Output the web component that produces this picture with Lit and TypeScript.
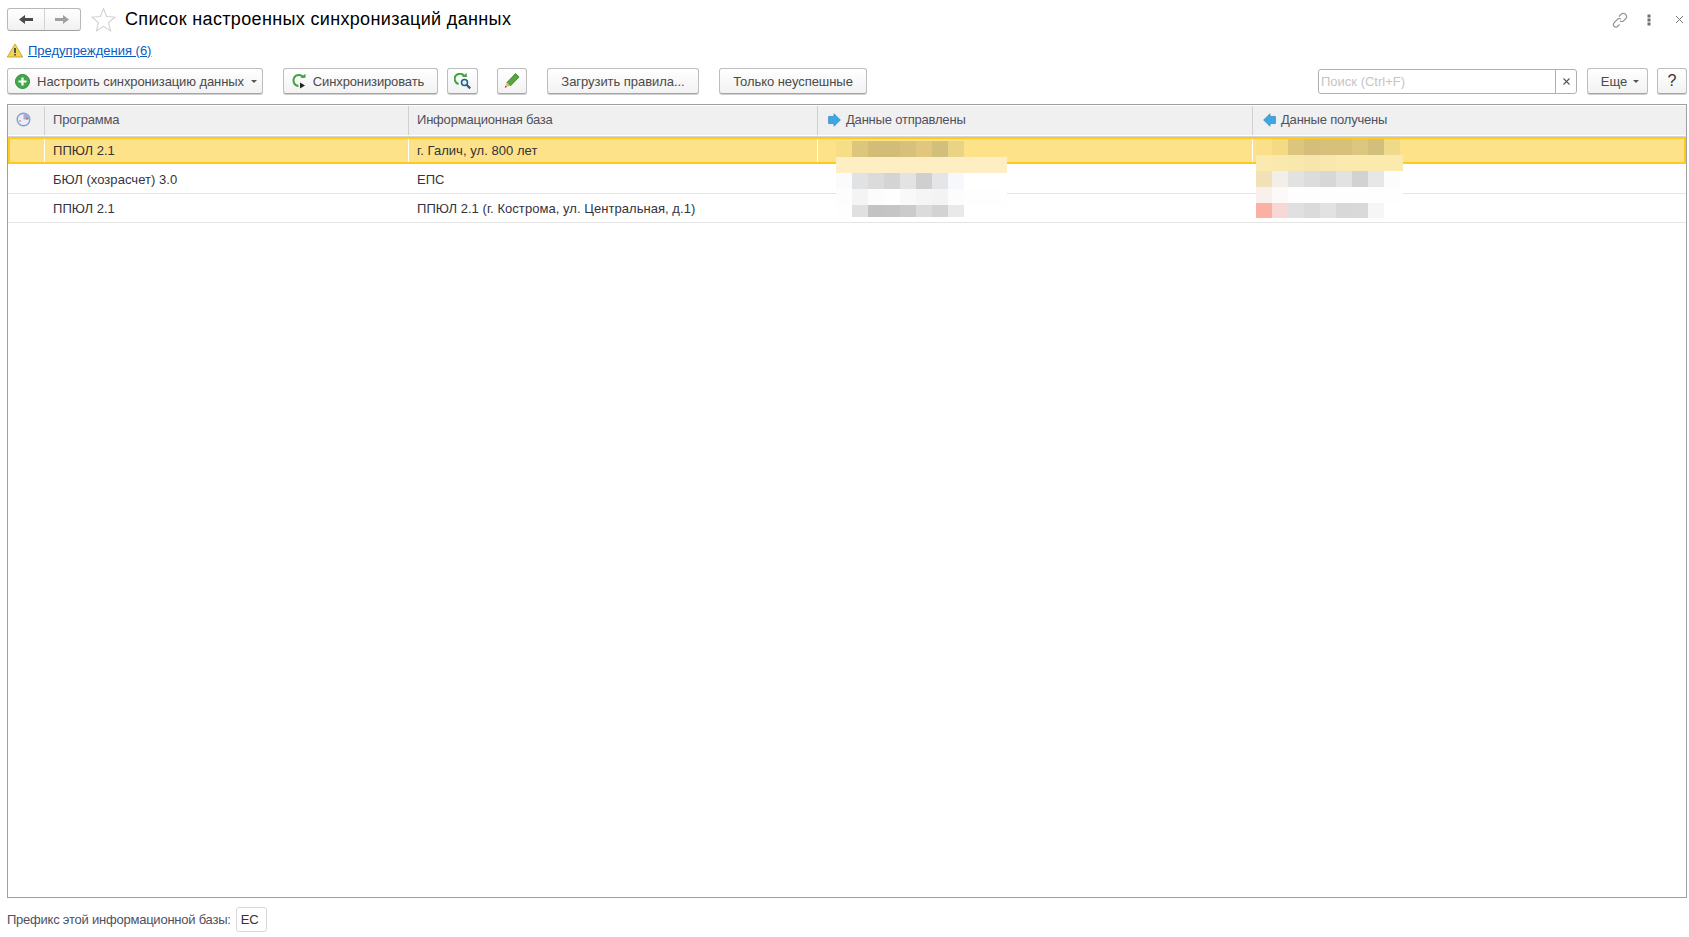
import { LitElement, html, css, svg } from "lit";
import { customElement } from "lit/decorators.js";

type Blob = { left: number; top: number; w: number; rows: { h: number; last?: number; cells: string[] }[] };

const sent: Blob = {
  left: 828, top: 36, w: 16,
  rows: [
    { h: 16, cells: ["#f6dd86", "#dcc67e", "#d2bd78", "#d2bd78", "#d6c07c", "#e0c67e", "#d2bf7c", "#e8d484"] },
    { h: 16, last: 11, cells: ["#fdefc3", "#fdefc3", "#fdefc3", "#fdefc3", "#fdefc3", "#fdefc3", "#fdefc3", "#fdefc3", "#fdefc3", "#fdefc3", "#fdefc3"] },
    { h: 16, cells: ["#fbfbfb", "#e1e2e4", "#dcdbdc", "#d4d4d4", "#e3e3e3", "#cfcfcf", "#e5e4e6", "#f7f8fc"] },
    { h: 16, last: 11, cells: ["#fdfdfd", "#f4f4f4", "#fcfcfc", "#fefefe", "#f9f9f9", "#f5f5f5", "#f3f3f3", "#fcfcfc", "#fefefe", "#fefefe", "#fefefe"] },
    { h: 12, cells: ["#fefefe", "#e0e0e0", "#c4c3c3", "#c6c5c5", "#cbcbcb", "#dcdadc", "#d3d3d3", "#e9e9ec"] },
  ],
};
const received: Blob = {
  left: 1248, top: 34, w: 16,
  rows: [
    { h: 16, cells: ["#fcdf8a", "#f5da84", "#dcc67e", "#d3be7a", "#d7c07c", "#d7c07c", "#dcc780", "#d3bf7c", "#efd98a"] },
    { h: 16, last: 19, cells: ["#faeab0", "#f9e9ae", "#f8e8ae", "#f6e6ae", "#f8e8ae", "#fbeaae", "#fbeaae", "#fbeaae", "#fbeaae"] },
    { h: 16, cells: ["#f0e2b6", "#f3efe8", "#e2e2e2", "#dcdcde", "#d7d7d7", "#e2e2e2", "#d2d2d2", "#e7e7e9", "#fcfcfc"] },
    { h: 16, last: 19, cells: ["#f9f0ee", "#fcf9f8", "#fefefe", "#fefefe", "#fefefe", "#fefefe", "#fefefe", "#fefefe", "#fefefe"] },
    { h: 15, cells: ["#fbb0a5", "#f6d8d4", "#e0e0e0", "#dbdbdc", "#e2e2e3", "#d8d8d8", "#d9d9d9", "#f6f6f6"] },
  ],
};

const rows = [
  ["ППЮЛ 2.1", "г. Галич, ул. 800 лет"],
  ["БЮЛ (хозрасчет) 3.0", "ЕПС"],
  ["ППЮЛ 2.1", "ППЮЛ 2.1 (г. Кострома, ул. Центральная, д.1)"],
];

const arrow = (dir: 1 | -1, color: string) =>
  svg`<svg width="14" height="9" viewBox="0 0 14 9" style="transform:scaleX(${dir})"><path d="M0 3h8V0l6 4.5L8 9V6H0z" fill="${color}"/></svg>`;

const blueArrow = (flip: boolean) =>
  svg`<svg width="13" height="14" viewBox="0 0 13 14" style="transform:scaleX(${flip ? -1 : 1})"><path d="M.6 3.4H6V.8L12.4 7 6 13.2V10.6H.6z" fill="#3ea6e4" stroke="#3285bd" stroke-width=".7"/></svg>`;

@customElement("app-root")
export class AppRoot extends LitElement {
  static styles = css`
    :host {
      display: flex;
      flex-direction: column;
      width: 1689px;
      height: 937px;
      box-sizing: border-box;
      padding: 8px 2px 0 7px;
      background: #fff;
      font-family: "Liberation Sans", Arial, sans-serif;
      font-size: 13px;
      color: #4a4a4a;
      overflow: hidden;
    }
    .top { display: flex; align-items: center; flex: none; height: 23px; }
    .nav {
      display: flex; width: 74px; height: 23px; box-sizing: border-box;
      border: 1px solid #b8b8b8; border-bottom-color: #a0a0a0; border-radius: 3px;
      background: linear-gradient(#fff, #f1f1f1);
    }
    .nav span { flex: 1; display: flex; align-items: center; justify-content: center; }
    .nav span + span { border-left: 1px solid #d2d2d2; }
    .star { margin-left: 10px; width: 25px; height: 25px; display: block; }
    h1 { margin: 0 0 0 9px; font-size: 18px; font-weight: 400; color: #000; letter-spacing: .34px; flex: 1; }
    .tools { display: flex; align-items: center; margin-right: 3px; }
    .tools svg { display: block; }
    .i-link { margin-right: 19px; }
    .i-dots { margin-right: 24px; }
    .warn { display: flex; align-items: center; gap: 5px; margin-top: 10px; height: 18px; flex: none; }
    .warn a { color: #0a5bc4; text-decoration: underline; }
    .bar { display: flex; align-items: center; margin-top: 9px; height: 26px; flex: none; }
    .btn {
      display: flex; align-items: center; justify-content: center; height: 26px; box-sizing: border-box;
      border: 1px solid #bdbdbd; border-bottom-color: #a5a5a5; border-radius: 3px;
      background: linear-gradient(#fff, #f2f2f2); box-shadow: 0 1px 0 #cfcfcf;
      color: #4a4a4a; white-space: nowrap;
    }
    .b1 { width: 256px; gap: 7px; margin-right: 20px; padding-left: 2px; letter-spacing: -.1px; }
    .b2 { width: 155px; gap: 6px; margin-right: 9px; padding-right: 6px; letter-spacing: -.13px; }
    .b3 { width: 31px; margin-right: 19px; }
    .b4 { width: 30px; margin-right: 20px; }
    .b5 { width: 152px; margin-right: 20px; letter-spacing: -.05px; }
    .b6 { width: 148px; letter-spacing: -.05px; }
    .caret { width: 0; height: 0; border: 3px solid transparent; border-top-color: #555; border-bottom-width: 0; }
    .search {
      margin-left: auto; display: flex; width: 259px; height: 25px; box-sizing: border-box;
      border: 1px solid #b0b0b0; border-radius: 3px; background: #fff;
    }
    .search .ph { flex: 1; padding-left: 2px; line-height: 23px; color: #c5c5c5; }
    .search .x { width: 20px; border-left: 1px solid #b0b0b0; display: flex; align-items: center; justify-content: center; }
    .more { width: 61px; gap: 6px; margin-left: 10px; padding-left: 5px; }
    .help { width: 30px; margin-left: 9px; font-size: 16px; color: #333; }
    .table {
      position: relative; flex: 1; margin-top: 10px; min-height: 0;
      border: 1px solid #a0a0a0; box-sizing: border-box;
    }
    .row { display: grid; grid-template-columns: 37px 364px 409px 435px 1fr; box-sizing: border-box; }
    .row > div { display: flex; align-items: center; padding-left: 8px; min-width: 0; white-space: nowrap; }
    .head { height: 31px; background: #f0f0f0; border-top: 1px solid #fff; border-bottom: 1px solid #fff; box-shadow: 0 1px 0 #d4d4d4; }
    .head > div { border-right: 1px solid #d0d0d0; color: #505060; padding-bottom: 2px; letter-spacing: -.2px; }
    .head > div:last-child { border-right: 0; }
    .head .ic { padding-left: 8px; }
    .head .ig { padding-left: 10px; gap: 5px; }
    .body-row { height: 29px; border-bottom: 1px solid #e4e4e4; color: #333344; letter-spacing: .05px; }
    .body-row.sel {
      height: 27px; margin: 1px 0; background: #fde28a;
      border: 2px solid #fdca1d;
      grid-template-columns: 35px 364px 409px 435px 1fr;
    }
    .body-row.sel > div:not(:last-child) { border-right: 1px solid #fff; }
    .body-row.sel > div { color: #333; }
    .blob { position: absolute; display: flex; flex-direction: column; pointer-events: none; }
    .blob div { display: flex; }
    .blob i { display: block; flex: none; }
    .foot { display: flex; align-items: center; gap: 5px; height: 39px; padding-top: 4px; box-sizing: border-box; flex: none; color: #505060; }
    .foot > span:first-child { letter-spacing: -.23px; }
    .prefix {
      width: 31px; height: 25px; box-sizing: border-box; border: 1px solid #d8d8d8; border-radius: 3px;
      display: flex; align-items: center; padding-left: 4px; color: #333;
    }
  `;

  private blob(b: Blob) {
    return html`<div class="blob" style="left:${b.left}px;top:${b.top}px">
      ${b.rows.map(
        (r) => html`<div style="height:${r.h}px">${r.cells.map(
          (c, i) => html`<i style="width:${i === r.cells.length - 1 && r.last ? r.last : b.w}px;height:${r.h}px;background:${c}"></i>`
        )}</div>`
      )}
    </div>`;
  }

  render() {
    return html`
      <div class="top">
        <div class="nav"><span>${arrow(-1, "#4a4a4a")}</span><span>${arrow(1, "#a0a0a0")}</span></div>
        <svg class="star" viewBox="0 0 24 24"><path d="M12 1.5l3 7.6 8 .6-6.2 5.2 2 8L12 18.6 5.2 23l2-8L1 9.7l8-.6z" fill="#fff" stroke="#cfcfcf" stroke-width="1"/></svg>
        <h1>Список настроенных синхронизаций данных</h1>
        <div class="tools">
          <svg class="i-link" width="16" height="16" viewBox="0 0 16 16"><g fill="none" stroke="#8a8a8a" stroke-width="1.1"><path d="M7 4.5l2.6-2.6a2.4 2.4 0 0 1 3.4 0l1 1a2.4 2.4 0 0 1 0 3.4L11.5 8.8a2.4 2.4 0 0 1-3.4 0"/><path d="M9 7.2a2.4 2.4 0 0 0-3.4 0L2 10.8a2.4 2.4 0 0 0 0 3.4l.2.2a2.4 2.4 0 0 0 3.4 0l2-2"/></g></svg>
          <svg class="i-dots" width="4" height="12" viewBox="0 0 4 12"><g fill="#707070"><rect x="0.5" y="0.5" width="3" height="3"/><rect x="0.5" y="4.5" width="3" height="3"/><rect x="0.5" y="8.5" width="3" height="3"/></g></svg>
          <svg width="9" height="9" viewBox="0 0 9 9"><path d="M1 1l7 7M8 1L1 8" stroke="#777" stroke-width="1"/></svg>
        </div>
      </div>
      <div class="warn">
        <svg width="16" height="15" viewBox="0 0 16 14"><path d="M8 .5L15.7 13.5H.3z" fill="#f6d44e" stroke="#b09a3c" stroke-width=".8"/><path d="M8 4.5v5" stroke="#333" stroke-width="1.6"/><path d="M8 10.5v1.6" stroke="#333" stroke-width="1.6"/></svg>
        <a>Предупреждения (6)</a>
      </div>
      <div class="bar">
        <div class="btn b1">
          <svg width="15" height="15" viewBox="0 0 15 15"><circle cx="7.5" cy="7.5" r="7" fill="#43a84a" stroke="#2f8a3a"/><path d="M7.5 3.5v8M3.5 7.5h8" stroke="#fff" stroke-width="2.2"/></svg>
          <span>Настроить синхронизацию данных</span><span class="caret"></span>
        </div>
        <div class="btn b2">
          <svg width="16" height="16" viewBox="0 0 16 16"><path d="M12.5 4.6A5.5 5.5 0 1 0 7.5 13" fill="none" stroke="#3ea53e" stroke-width="2"/><path d="M9.5 4.8h5v-4z" fill="#3ea53e"/><path d="M9 9.5l5 3-5 3z" fill="#222"/></svg>
          <span>Синхронизировать</span>
        </div>
        <div class="btn b3">
          <svg width="18" height="17" viewBox="0 0 18 17"><path d="M10.5 3.6A5.2 5.2 0 1 0 4.6 11" fill="none" stroke="#3ea53e" stroke-width="2"/><path d="M7.8 3.9h5V0z" fill="#3ea53e"/><circle cx="10.5" cy="9.5" r="3" fill="#dff0fa" stroke="#1d5f8a" stroke-width="1.5"/><path d="M12.6 11.8l3.6 3.6" stroke="#1d5f8a" stroke-width="2.2"/></svg>
        </div>
        <div class="btn b4">
          <svg width="16" height="16" viewBox="1 1.5 13 13"><path d="M3.4 9.2l7-7.2 2.8 2.8-7 7.2z" fill="#56a83c" stroke="#3d7f2b" stroke-width=".7"/><path d="M3.4 9.2L1.6 13.5l4.2-1.7z" fill="#eab777"/><path d="M1.6 13.5l.7-1.7 1 1z" fill="#444"/></svg>
        </div>
        <div class="btn b5">Загрузить правила...</div>
        <div class="btn b6">Только неуспешные</div>
        <div class="search"><span class="ph">Поиск (Ctrl+F)</span><span class="x"><svg width="7" height="7" viewBox="0 0 7 7"><path d="M.5.5l6 6M6.5.5l-6 6" stroke="#555" stroke-width="1.1"/></svg></span></div>
        <div class="btn more"><span>Еще</span><span class="caret"></span></div>
        <div class="btn help">?</div>
      </div>
      <div class="table">
        <div class="row head">
          <div class="ic"><svg width="15" height="15" viewBox="0 0 15 15"><circle cx="7.5" cy="7.5" r="6.3" fill="#e8eefa" stroke="#8a9cc8" stroke-width="1.4"/><path d="M7.5 1.2a6.3 6.3 0 0 1 6.3 6.3H7.5z" fill="#9db0dc"/><circle cx="11" cy="6.5" r="1" fill="#e25555"/><circle cx="4" cy="9" r=".8" fill="#e25555"/></svg></div>
          <div>Программа</div>
          <div>Информационная база</div>
          <div class="ig">${blueArrow(false)}<span>Данные отправлены</span></div>
          <div class="ig">${blueArrow(true)}<span>Данные получены</span></div>
        </div>
        ${rows.map(
          (r, i) => html`<div class="row body-row ${i === 0 ? "sel" : ""}">
            <div></div><div>${r[0]}</div><div>${r[1]}</div><div></div><div></div>
          </div>`
        )}
        ${this.blob(sent)} ${this.blob(received)}
      </div>
      <div class="foot"><span>Префикс этой информационной базы:</span><span class="prefix">ЕС</span></div>
    `;
  }
}
